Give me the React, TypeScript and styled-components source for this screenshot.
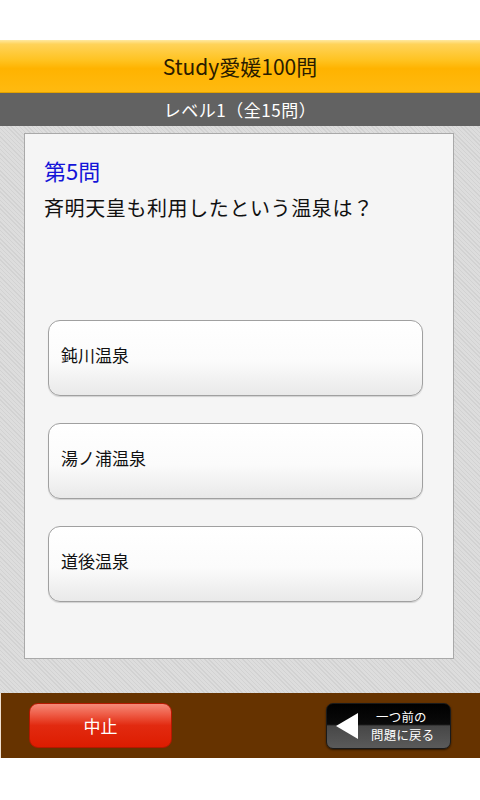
import styled, { createGlobalStyle } from "styled-components";

const GlobalStyle = createGlobalStyle`
  html, body {
    margin: 0;
    padding: 0;
    background: #ffffff;
  }
  body {
    font-family: "Noto Sans CJK JP", "DejaVu Sans", sans-serif;
  }
`;

const Screen = styled.div`
  width: 480px;
  height: 800px;
  display: flex;
  flex-direction: column;
  background: #ffffff;
  overflow: hidden;
`;

const Gap = styled.div<{ $h: number }>`
  height: ${(p) => p.$h}px;
  flex-shrink: 0;
`;

const TitleBar = styled.div`
  height: 52px;
  flex-shrink: 0;
  display: flex;
  align-items: center;
  justify-content: center;
  background: linear-gradient(
    to bottom,
    #ffe9a0 0%,
    #ffd35a 8%,
    #ffc21e 40%,
    #ffb300 55%,
    #ffba10 100%
  );
  border-bottom: 1px solid #e3a200;
  color: #2a1c00;
  font-size: 21px;
`;

const LevelBar = styled.div`
  height: 33px;
  flex-shrink: 0;
  display: flex;
  align-items: center;
  justify-content: center;
  background: #626262;
  color: #ffffff;
  font-size: 17px;
  letter-spacing: 0.5px;
`;

const Stage = styled.div`
  flex: 1;
  min-height: 0;
  display: flex;
  flex-direction: column;
  padding: 7px 26px 34px 24px;
  background: repeating-linear-gradient(
    45deg,
    #d2d2d2 0px,
    #d2d2d2 1px,
    #dddddd 1px,
    #dddddd 3px
  );
`;

const Card = styled.div`
  flex: 1;
  display: flex;
  flex-direction: column;
  background: #f5f5f5;
  border: 1px solid #a9a9a9;
  padding: 21px 30px 0 19px;
`;

const QuestionNo = styled.div`
  color: #1414d8;
  font-size: 22px;
  line-height: 30px;
`;

const QuestionText = styled.div`
  color: #111111;
  font-size: 20px;
  line-height: 30px;
  margin-top: 8px;
  letter-spacing: 0.6px;
`;

const Choices = styled.div`
  display: flex;
  flex-direction: column;
  gap: 27px;
  margin-top: 97px;
  padding-left: 4px;
`;

const Choice = styled.button`
  height: 76px;
  display: flex;
  align-items: center;
  padding: 0 0 8px 12px;
  border: 1px solid #a0a0a0;
  border-radius: 12px;
  background: linear-gradient(to bottom, #ffffff 0%, #fbfbfb 55%, #e9e9e9 100%);
  box-shadow: 0 1px 1px rgba(0, 0, 0, 0.15);
  color: #111111;
  font-family: inherit;
  font-size: 17px;
  text-align: left;
`;

const Footer = styled.div`
  height: 65px;
  flex-shrink: 0;
  display: flex;
  align-items: center;
  justify-content: space-between;
  padding: 0 29px 0 28px;
  background: #663300;
  border-left: 1px solid #f0e0d0;
`;

const StopButton = styled.button`
  width: 143px;
  height: 45px;
  border: 1px solid #b51800;
  border-radius: 9px;
  background: linear-gradient(
    to bottom,
    #f58a78 0%,
    #ee5a44 25%,
    #e22a10 50%,
    #dd1c00 100%
  );
  color: #ffffff;
  font-family: inherit;
  font-size: 17px;
  padding: 0;
`;

const BackButton = styled.button`
  width: 125px;
  height: 46px;
  display: flex;
  align-items: center;
  gap: 9px;
  padding: 0 0 0 9px;
  border: 1px solid #1a1a1a;
  border-radius: 7px;
  background: linear-gradient(
    to bottom,
    #000000 0%,
    #0a0a0a 46%,
    #474747 50%,
    #5a5a5a 100%
  );
  box-shadow: 0 1px 2px rgba(0, 0, 0, 0.6);
  color: #ffffff;
  font-family: inherit;
`;

const BackLabel = styled.span`
  display: flex;
  flex-direction: column;
  align-items: flex-start;
  font-size: 12.4px;
  line-height: 18px;
  padding-left: 4px;
  letter-spacing: 0.3px;
`;

const BackLine = styled.span<{ $indent?: number }>`
  padding-left: ${(p) => p.$indent ?? 0}px;
`;

function LeftArrow() {
  return (
    <svg width="22" height="26" viewBox="0 0 22 26">
      <polygon points="22,0 22,26 0,13" fill="#ffffff" />
    </svg>
  );
}

const choices = ["鈍川温泉", "湯ノ浦温泉", "道後温泉"];

export default function App() {
  return (
    <Screen>
      <GlobalStyle />
      <Gap $h={40} />
      <TitleBar>Study愛媛100問</TitleBar>
      <LevelBar>レベル1（全15問）</LevelBar>
      <Stage>
        <Card>
          <QuestionNo>第5問</QuestionNo>
          <QuestionText>斉明天皇も利用したという温泉は？</QuestionText>
          <Choices>
            {choices.map((c) => (
              <Choice key={c}>{c}</Choice>
            ))}
          </Choices>
        </Card>
      </Stage>
      <Footer>
        <StopButton>中止</StopButton>
        <BackButton>
          <LeftArrow />
          <BackLabel>
            <BackLine $indent={5}>一つ前の</BackLine>
            <BackLine>問題に戻る</BackLine>
          </BackLabel>
        </BackButton>
      </Footer>
      <Gap $h={42} />
    </Screen>
  );
}
